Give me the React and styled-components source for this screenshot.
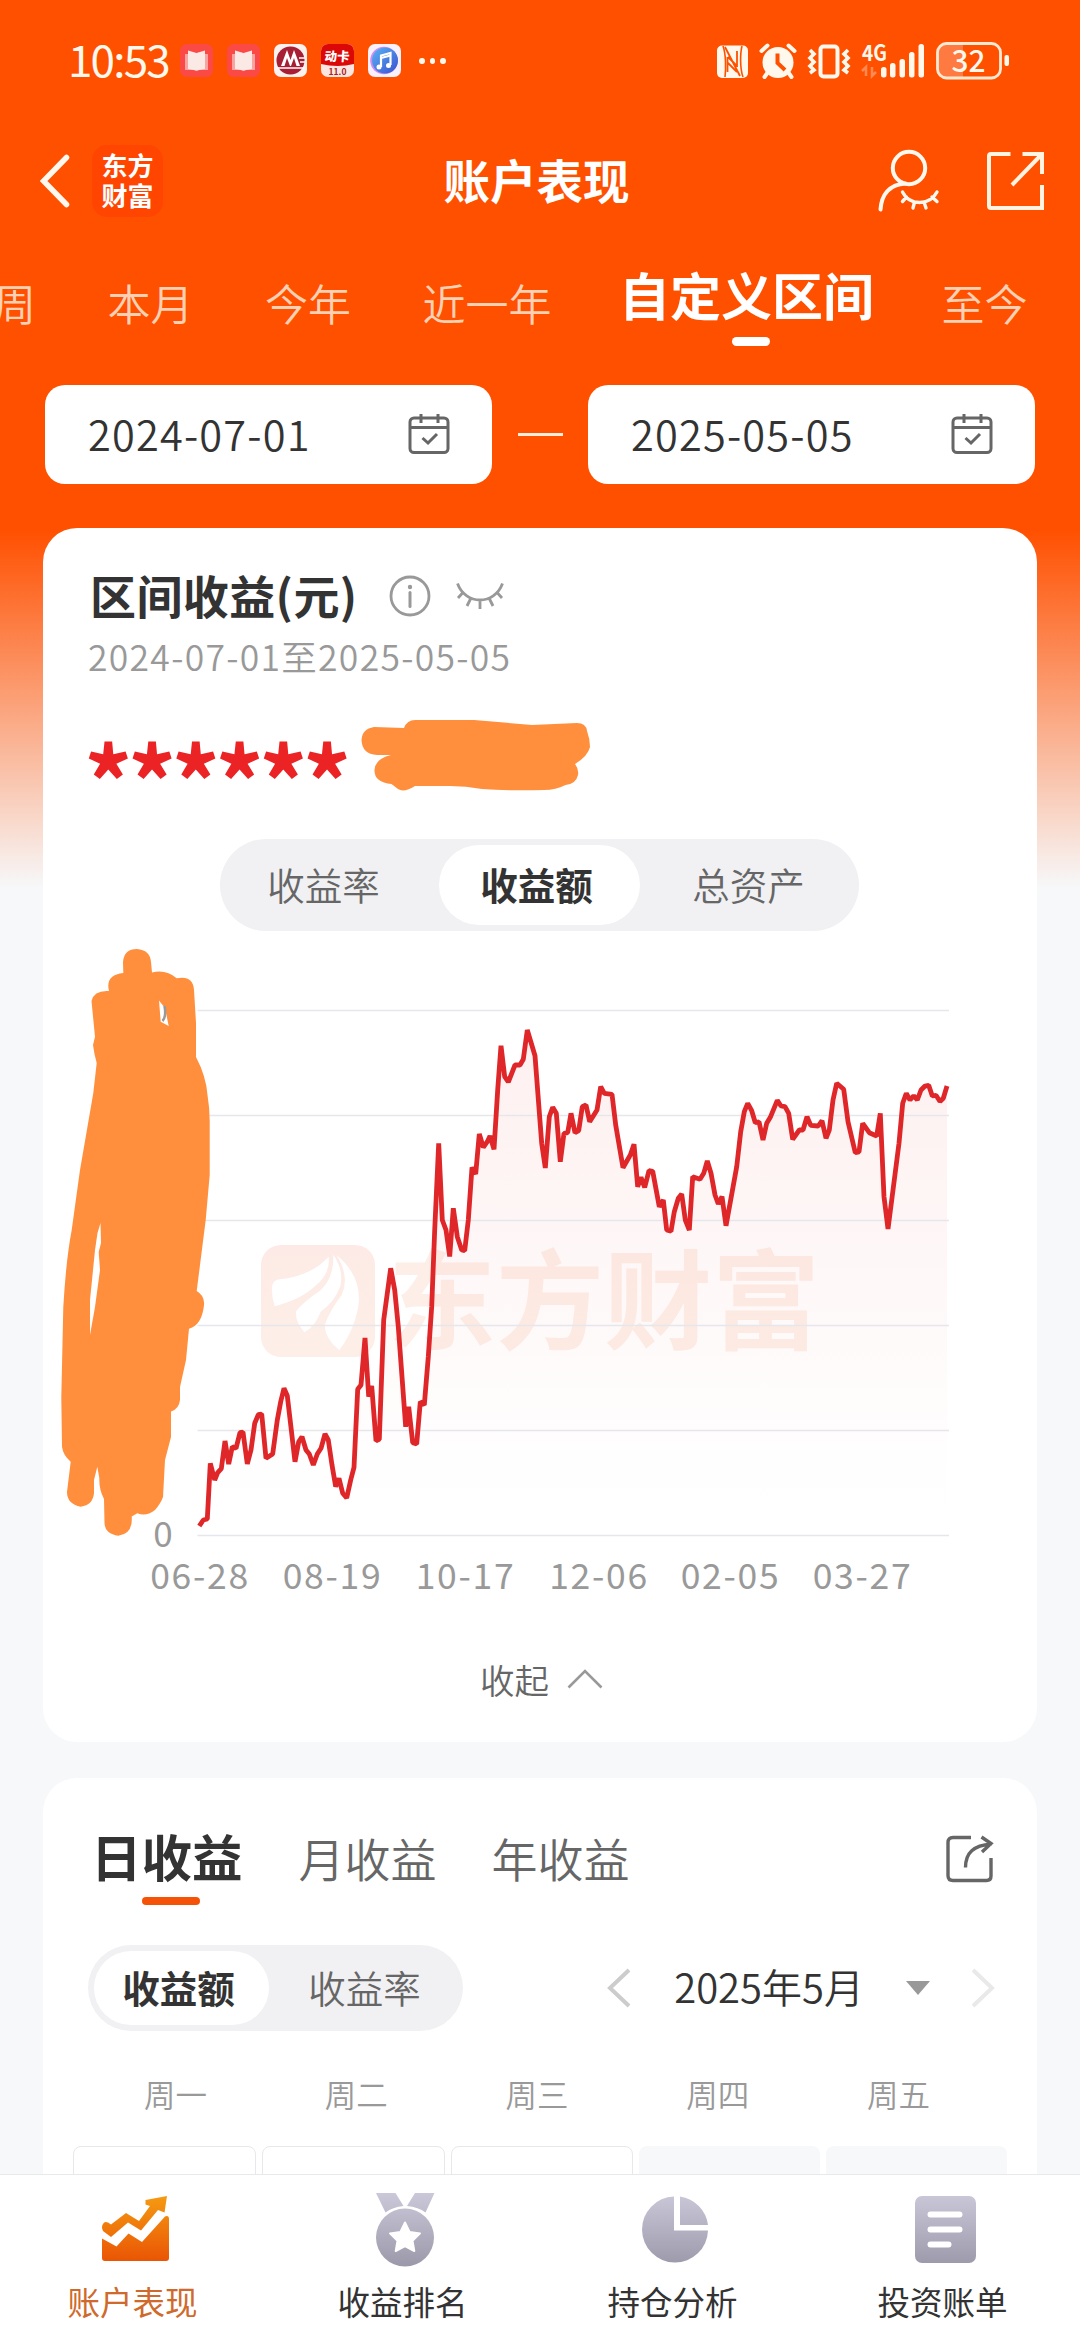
import React from "react";
import styled, { createGlobalStyle } from "styled-components";

const RANGES = ["周", "本月", "今年", "近一年", "自定义区间", "至今"];
const WEEKDAYS = ["周一", "周二", "周三", "周四", "周五"];
const GRID_Y = [1010.5, 1115.5, 1220.5, 1325.5, 1430.5, 1535.5];
const DATE_LABELS = [
  ["06-28", 200],
  ["08-19", 332.5],
  ["10-17", 465.5],
  ["12-06", 599],
  ["02-05", 730.5],
  ["03-27", 862.5],
];

const LINE =
  "199.3,1526 203.3,1520 207.3,1519 210.3,1463.3 214.7,1480 217.7,1472.7 221.3,1468.7 225,1441 228.7,1464 232.3,1446.7 236,1448.3 240,1432.7 243,1432 247.3,1464 251,1450 254.7,1423.3 258.3,1414.7 261.7,1414 266,1458.3 272.7,1454 277.3,1420 280.7,1401.7 284,1388.3 287.3,1395.7 291.3,1430 295,1461.7 298.7,1441.7 302,1436.7 306,1450 309.3,1454 313.3,1465 317.3,1454 321,1448.3 325,1434 328.3,1440 332,1465 335.7,1486.7 339,1478.3 342.7,1493.3 346.7,1498 350.7,1480 354,1467.3 357.7,1389.3 361,1385 365,1338 368.7,1396.7 371.7,1386 376,1440.7 379.3,1439.3 383.7,1320 387.3,1293.3 390.7,1268.3 394.7,1290 398.3,1326.7 405.7,1426.7 408.7,1406.7 412.7,1442.7 416.7,1444 420.3,1401.7 424.3,1405 428.3,1356.7 431.7,1306.7 434.7,1230 438.7,1143.3 442.3,1220 446,1230 449.7,1256.5 453.3,1208.3 457.3,1236.7 461.7,1250 464.7,1250.7 468.3,1220 472,1167.3 475.7,1174 479.3,1134 483.3,1147.3 487.3,1141.7 490,1136 494,1149.3 497.7,1090 501,1045.7 504.7,1076.7 508.3,1082 515,1065 520,1065 523.3,1059.3 527.3,1030 535,1055.7 541.7,1143.3 545.3,1168 549.3,1116.7 552.7,1107.3 556.3,1113.3 560.3,1161.7 564,1133.3 567.7,1132.7 571,1113.3 575,1132.7 578.7,1130.7 582.3,1106.7 586,1105 589.7,1121.7 597,1110 600.7,1086.7 604.3,1093.3 612,1094.3 615.7,1125 623,1167.7 630.3,1155 634,1144.3 637.7,1186.7 641,1177.3 644.7,1187.3 649,1170.7 652.7,1171.3 659.3,1206.7 663.3,1200 666.7,1230 671,1231.3 674.3,1211.7 678.3,1198.3 681.7,1194 685.3,1220 689.3,1230 692.7,1176.7 700,1179.3 703.7,1173.3 707.3,1161 711,1173.3 715,1195 718.3,1204 722,1196.7 726,1225.7 736.7,1166.7 740.7,1131.7 744.3,1111.7 747.7,1103.3 751.7,1110.7 755.3,1122.7 759,1121.7 763,1140 766.7,1123.3 770.3,1117.3 777.3,1100.3 781,1106 785,1106.7 788.7,1113.3 792.7,1139.3 799.3,1130 803,1130 807,1116.7 810.7,1125.3 818.3,1126 822,1120.7 826,1138.3 829.3,1130 833,1100 836.7,1083.3 843.7,1089.3 848,1121.7 855.3,1152.7 859,1152 862.7,1123.3 869.3,1132.7 876.7,1136 880.3,1113.3 884,1196.7 888,1229 899,1143.3 902.7,1103.3 906.3,1093.3 910,1100 913.7,1095.7 917.3,1100 921,1090 925,1086 928.7,1085.3 932.3,1096 936,1095.3 940,1101.5 943.3,1098.3 947,1086";

function BookIcon() {
  return (
    <svg width="33" height="33" viewBox="0 0 33 33">
      <rect width="33" height="33" rx="7" fill="#fb4a45" />
      <path d="M5 10h3v14h17V10h3v16H19l-2.500 1-2.500-1H5z" fill="#fba3a0" />
      <path d="M8 6.500l8.500 2.500v17.500L8 25zM25 6.500L16.500 9v17.500l8.500-1.500z" fill="#fbe9e6" />
    </svg>
  );
}

function BankIcon() {
  return (
    <svg width="33" height="33" viewBox="0 0 33 33">
      <rect width="33" height="33" rx="7" fill="#fbf1ee" />
      <circle cx="16.500" cy="16.500" r="14" fill="#a81f35" />
      <path d="M7 22l6-16 3.500 10L20 6l6 16h-3.500L20 14l-3 8h-1l-3-8-2.500 8z" fill="#fff" />
      <path d="M3 24h27M25 14h6M26 18h5" stroke="#fff" strokeWidth="1.600" />
    </svg>
  );
}

function CardAppIcon() {
  return (
    <svg width="33" height="33" viewBox="0 0 33 33">
      <rect width="33" height="33" rx="7" fill="#fbe6e2" />
      <path d="M0 20V7a7 7 0 0 1 7-7h19a7 7 0 0 1 7 7v13q-16.500 4-33 0z" fill="#dc0808" />
      <text x="17" y="17" fontSize="12.500" fontWeight="900" fill="#fff" textAnchor="middle" transform="skewX(-4)">
        动卡
      </text>
      <text x="16.500" y="31" fontSize="8.500" fontWeight="700" fill="#a82020" textAnchor="middle">
        11.0
      </text>
    </svg>
  );
}

function MusicIcon() {
  return (
    <svg width="33" height="33" viewBox="0 0 33 33">
      <defs>
        <linearGradient id="music" x1="0" y1="0" x2="1" y2="1">
          <stop offset="0" stopColor="#58b4f5" />
          <stop offset="1" stopColor="#3b50cf" />
        </linearGradient>
      </defs>
      <rect width="33" height="33" rx="7" fill="#f8f0fa" />
      <circle cx="16" cy="16.500" r="13.800" fill="#cf8df0" />
      <circle cx="17" cy="16.500" r="13" fill="url(#music)" />
      <path d="M13 23V11.500L22.500 9v12" fill="none" stroke="#fff" strokeWidth="2.200" />
      <path d="M13 14l9.500-2.500" stroke="#fff" strokeWidth="2" />
      <circle cx="11" cy="23" r="2.500" fill="#fff" />
      <circle cx="20.500" cy="21.500" r="2.500" fill="#fff" />
    </svg>
  );
}

function StatusIcons() {
  return (
    <svg width="294" height="80" viewBox="716 20 294 80">
      <g fill="#fff8ec">
        <rect x="717" y="44.500" width="31" height="32.500" rx="5" />
        <path d="M725 46l15 29M727.500 56v15M737 50v16M728 56l9 9M728 62l9 9" stroke="#ff5000" strokeWidth="1.800" fill="none" />
        <path d="M723 45c3 8 3 23 2 31M742 45c-2 8-2 23 1 31" stroke="#ff5000" strokeWidth="1.600" fill="none" />
        <circle cx="778" cy="61.500" r="15.500" />
        <path d="M761.500 50l6-5.500M788.500 44.500l6 5.500M768 71l-3.500 5M788 71l3.500 5" stroke="#fff8ec" strokeWidth="4" strokeLinecap="round" />
        <path d="M777.500 52.500V62l7.500 7" fill="none" stroke="#ff5000" strokeWidth="4" />
        <rect x="820.500" y="45.500" width="17" height="30" rx="3" fill="none" stroke="#fff8ec" strokeWidth="4" />
        <path d="M810 49l4 4-4 4 4 4-4 4 4 4-4 3M848 49l-4 4 4 4-4 4 4 4-4 4 4 3" fill="none" stroke="#fff8ec" strokeWidth="3.600" />
        <text x="862" y="60" fontSize="22" fontWeight="700" textLength="25" lengthAdjust="spacingAndGlyphs">
          4G
        </text>
        <path d="M866 75V66l-4 4M872 66v9l4-4" fill="none" stroke="#ff8a52" strokeWidth="2.500" />
        <rect x="881" y="66" width="5.500" height="10.500" rx="2.500" />
        <rect x="890" y="62" width="5.500" height="14.500" rx="2.500" />
        <rect x="899.500" y="58" width="5.500" height="18.500" rx="2.500" />
        <rect x="909" y="51" width="5.500" height="25.500" rx="2.500" />
        <rect x="918.500" y="43" width="5.500" height="33.500" rx="2.500" />
        <path d="M963 43v34h-17q-8 0-8-8V51q0-8 8-8z" fill="#ff7a40" />
        <rect x="937.500" y="42.500" width="63" height="34.500" rx="9" fill="none" stroke="#ffe9d2" strokeWidth="2.800" />
        <rect x="1004.500" y="54" width="4.500" height="11" rx="2" />
        <text x="951.500" y="71" fontSize="31" fontWeight="500" textLength="34" lengthAdjust="spacingAndGlyphs">
          32
        </text>
      </g>
    </svg>
  );
}

function ProfileIcon() {
  return (
    <svg width="62" height="64" viewBox="878 148 62 64" fill="none" stroke="#fff8ee" strokeWidth="4" strokeLinecap="round">
      <circle cx="909" cy="167" r="16.200" />
      <path d="M880.500 208.500c1-14 8-25 25-26" />
      <path d="M902.500 191c7 14 27 14 34.500 0M906.500 196l-4 4.500M914.500 201l-1.500 6M924 201l2 6M932 196l5 4.500" strokeWidth="3.400" />
    </svg>
  );
}

function OpenIcon() {
  return (
    <svg width="58" height="60" viewBox="986 150 58 60" fill="none" stroke="#fff3e2" strokeWidth="4">
      <path d="M1010.500 153h-19.500q-2 0-2 2v50q0 2 2 2h51V184" />
      <path d="M1022.500 153h19.500v20M1041 154l-29 30" />
    </svg>
  );
}

function CalendarIcon() {
  return (
    <svg width="42" height="42" viewBox="0 0 42 42" fill="none" stroke="#666" strokeWidth="3">
      <rect x="2" y="5" width="38" height="34.500" rx="4" />
      <path d="M2 14.500h38M13 1v9M30 1v9" />
      <path d="M14.500 25l5.500 5 9-9" />
    </svg>
  );
}

function ClosedEye() {
  return (
    <svg width="48" height="28" viewBox="0 0 48 28" fill="none" stroke="#999" strokeWidth="2.800">
      <path d="M1.500 1.500c8 22 37 22 45 0M6.500 11L2 16M15 16l-4 8M24 18v9M33 16l4 8M41.500 11l4.500 5" />
    </svg>
  );
}

function InfoIcon() {
  return (
    <svg width="42" height="42" viewBox="0 0 42 42" fill="none" stroke="#999" strokeWidth="2.800">
      <circle cx="21" cy="21" r="19" />
      <path d="M21 17.500v14" strokeWidth="3" strokeLinecap="round" />
      <circle cx="21" cy="12" r="2.200" fill="#999" stroke="none" />
    </svg>
  );
}

function ShareIcon() {
  return (
    <svg width="48" height="48" viewBox="0 0 48 48" fill="none" stroke="#666" strokeWidth="3.400">
      <path d="M25 2.500H7Q2 2.500 2 7.500v33q0 5 5 5h33.500q4.500 0 4.500-4.500V23" />
      <path d="M19.500 32.500c0-15 8-22 26-23.500M35.500 2l9.500 6.500-9 8.500" />
    </svg>
  );
}

function Smudge() {
  return (
    <svg width="230" height="72" viewBox="361 718 230 72">
      <path
        d="M361.500 739Q362 728 374 726L404 727Q407 719 415 719H474L532 724L577 722Q586 722 587 730Q590 738 590 746Q588 755 575 763Q579 768 578 774Q576 783 565.500 784Q556 789 544 789Q510 790 482 788Q466 785 450 785H415Q404 792 398 788L391.500 783Q374 781 374.500 769Q375 758 391 754H377Q362 753 361.500 739Z"
        fill="#ff8f3c"
      />
    </svg>
  );
}

function TrendChart() {
  return (
    <ChartSvg viewBox="43 931 994 669">
      <defs>
        <linearGradient id="area" x1="0" y1="1030" x2="0" y2="1535" gradientUnits="userSpaceOnUse">
          <stop offset="0" stopColor="#e82426" stopOpacity="0.07" />
          <stop offset="0.400" stopColor="#e82426" stopOpacity="0.04" />
          <stop offset="0.850" stopColor="#e82426" stopOpacity="0.005" />
          <stop offset="1" stopColor="#e82426" stopOpacity="0" />
        </linearGradient>
        <linearGradient id="mark" x1="0" y1="0" x2="0" y2="1">
          <stop offset="0" stopColor="#fdeae6" />
          <stop offset="1" stopColor="#fdefe7" />
        </linearGradient>
      </defs>
      <rect x="261" y="1245" width="114" height="112" rx="20" fill="url(#mark)" />
      <g transform="translate(40 1230) scale(0.33333)" fill="#fff">
        <path d="M696 168Q700 150 718 148Q810 140 866 80Q872 130 828 166Q785 208 704 229Q694 200 696 168Z" />
        <path d="M880 74Q912 120 901 168Q885 215 842 245Q825 290 793 307Q765 275 768 244Q790 215 840 182Q882 145 880 74Z" />
        <path d="M890 76Q958 130 957 210Q950 290 898 361Q850 320 855 283Q870 240 905 195Q930 140 890 76Z" />
      </g>
      <text x="388" y="1341" fontSize="108" fontWeight="700" fill="#fdefe7">
        东方财富
      </text>
      <polygon points={`199.300,1535 ${LINE} 947,1535`} fill="url(#area)" />
      {GRID_Y.map((y) => (
        <path key={y} d={`M197.500 ${y}H949`} stroke="#e6e7ec" strokeWidth="1.500" />
      ))}
      <polyline points={LINE} fill="none" stroke="#df2629" strokeWidth="4.800" strokeLinejoin="bevel" />
      <text x="163" y="1546.500" fontSize="35" fill="#999" textAnchor="middle">
        0
      </text>
      {DATE_LABELS.map(([label, x]) => (
        <text key={label} x={x} y="1588.500" fontSize="35.500" letterSpacing="1.700" fill="#999" textAnchor="middle">
          {label}
        </text>
      ))}
      <path
        fillRule="evenodd"
        fill="#ff8f3c"
        d="M123.300 973L123 962Q124 949 137 949Q150 950 151 962L152 972.500Q166 969 176.700 978.300Q193 975 194 990L196 1023V1057Q206 1076 207.500 1095Q210 1110 209.700 1125V1175L205.700 1220L196.700 1291Q205 1296 204 1305Q202 1325 189 1328.700L186 1360L180 1387V1400Q179 1409 171 1411.500V1437L165 1460L163 1497Q161 1503 155 1510Q146 1517 137.300 1513.300L131.700 1516.500Q133 1534 118.300 1535.700Q105 1534 104.500 1523L104 1499Q99 1490 99.300 1478L97.300 1466.700L94 1480V1493Q93 1505 80.700 1506.700Q67 1504 67 1492L70.700 1461.700Q63 1455 62 1446.700L61.300 1397L63.300 1307Q66 1260 71.700 1230L80 1170L93.300 1093L96.700 1063Q94 1053 93 1045L95 1036.700L91.500 1001Q94 990 109 991Q105 975 123.300 973ZM159 1000.500L165 1008L168.700 1026L160.700 1021.700ZM100.500 1223L101 1243L98.700 1252L100 1270L95 1307L90 1335V1300L95 1250L97.500 1233Z"
      />
      <path d="M164.500 1006q2 11-2 15" fill="none" stroke="#999" strokeWidth="2.500" />
    </ChartSvg>
  );
}

function TrendNavIcon() {
  return (
    <svg width="68" height="74" viewBox="101 2193 68 74">
      <defs>
        <linearGradient id="hot" x1="0" y1="0" x2="0" y2="1">
          <stop offset="0" stopColor="#f59a12" />
          <stop offset="1" stopColor="#ea5504" />
        </linearGradient>
      </defs>
      <path
        fill="url(#hot)"
        d="M102 2238.500L116.500 2246.500L128.500 2233.500L142 2242L165 2216.500Q169 2215 169 2219V2258Q169 2261 166 2261H105Q102 2261 102 2258ZM103 2224Q105 2220 111 2224.500L126 2213L139 2221L150 2206L145.500 2204.500V2200L167 2196L164.500 2212.500L158 2210L141 2230.500L128 2222.500L111 2237L103 2231Q101 2227 103 2224Z"
      />
    </svg>
  );
}

function GreyDefs() {
  return (
    <defs>
      <linearGradient id="grey" x1="0" y1="2193" x2="0" y2="2265" gradientUnits="userSpaceOnUse">
        <stop offset="0" stopColor="#cac8d9" />
        <stop offset="1" stopColor="#9c9aaa" />
      </linearGradient>
    </defs>
  );
}

function MedalNavIcon() {
  return (
    <svg width="60" height="74" viewBox="376.500 2193 60 74" fill="url(#grey)">
      <GreyDefs />
      <path d="M377.500 2193H397L405 2206Q394 2207 387 2212.500ZM416.500 2193H436L427 2212.500Q420 2207 408.500 2206Z" />
      <circle cx="406.500" cy="2237.500" r="29" />
      <path
        d="M406.500 2222.500l4.600 9.400 10.400 1.500-7.500 7.300 1.800 10.300-9.300-4.900-9.300 4.900 1.800-10.300-7.500-7.300 10.400-1.500z"
        fill="#fff"
        stroke="#fff"
        strokeWidth="2"
        strokeLinejoin="round"
      />
    </svg>
  );
}

function PieNavIcon() {
  return (
    <svg width="68" height="74" viewBox="641 2193 68 74" fill="url(#grey)">
      <path d="M674 2196.500V2230.500H708A33 33 0 1 1 674 2196.500ZM680 2196.500A33 33 0 0 1 708 2225H680Z" />
    </svg>
  );
}

function BillNavIcon() {
  return (
    <svg width="62" height="74" viewBox="914 2193 62 74">
      <rect x="915" y="2196" width="61" height="67" rx="7" fill="url(#grey)" />
      <path d="M930.500 2214.500h29M930.500 2229.500h29M930.500 2244.500h18" stroke="#fff" strokeWidth="6" strokeLinecap="round" />
    </svg>
  );
}

const NAV = [
  { label: "账户表现", Icon: TrendNavIcon },
  { label: "收益排名", Icon: MedalNavIcon },
  { label: "持仓分析", Icon: PieNavIcon },
  { label: "投资账单", Icon: BillNavIcon },
];

export default function App() {
  return (
    <Page>
      <GlobalStyle />
      <StatusBar>
        <Time>10:53</Time>
        <Notices>
          <BookIcon />
          <BookIcon />
          <BankIcon />
          <CardAppIcon />
          <MusicIcon />
        </Notices>
        <Dots>
          <i />
          <i />
          <i />
        </Dots>
        <StatusIcons />
      </StatusBar>

      <Header>
        <HeaderSide>
          <svg width="30" height="54" viewBox="0 0 30 54" fill="none" stroke="#fff8ee" strokeWidth="5.500" strokeLinecap="round">
            <path d="M26.500 3.500L3.500 27l23 23.500" />
          </svg>
          <Brand>
            东方
            <br />
            财富
          </Brand>
        </HeaderSide>
        <Title>账户表现</Title>
        <HeaderSide $right>
          <ProfileIcon />
          <OpenIcon />
        </HeaderSide>
      </Header>

      <RangeTabs>
        {RANGES.map((range) => (
          <RangeTab key={range} $active={range === "自定义区间"}>
            {range}
          </RangeTab>
        ))}
      </RangeTabs>

      <DateRow>
        <DateBox>
          2024-07-01
          <CalendarIcon />
        </DateBox>
        <Dash />
        <DateBox>
          2025-05-05
          <CalendarIcon />
        </DateBox>
      </DateRow>

      <Card $height="1214px">
        <CardTitle>
          区间收益(元)
          <InfoIcon />
          <ClosedEye />
        </CardTitle>
        <Period>2024-07-01至2025-05-05</Period>
        <AmountRow>
          <Stars>******</Stars>
          <Smudge />
        </AmountRow>
        <Segments $wide>
          <Segment $inset="0 18px 4px 0">收益率</Segment>
          <Segment $active $inset="0 6px 4px 0">
            收益额
          </Segment>
          <Segment $inset="0 0 4px 4px">总资产</Segment>
        </Segments>
        <TrendChart />
        <Collapse>
          收起
          <svg width="36" height="20" viewBox="0 0 36 20" fill="none" stroke="#999" strokeWidth="2.600">
            <path d="M1.500 18.500L18 2l16.500 16.500" />
          </svg>
        </Collapse>
      </Card>

      <Card $height="700px">
        <ProfitHead>
          <ProfitTab $active>日收益</ProfitTab>
          <ProfitTab>月收益</ProfitTab>
          <ProfitTab>年收益</ProfitTab>
          <ShareIcon />
        </ProfitHead>
        <FilterRow>
          <Segments>
            <Segment $active $inset="0 6px 4px 0">
              收益额
            </Segment>
            <Segment $inset="0 0 4px 3px">收益率</Segment>
          </Segments>
          <MonthPicker>
            <svg width="24" height="40" viewBox="0 0 24 40" fill="none" stroke="#ccc" strokeWidth="4">
              <path d="M22 2L3 20l19 18" />
            </svg>
            <Month>2025年5月</Month>
            <Caret />
            <svg width="24" height="40" viewBox="0 0 24 40" fill="none" stroke="#e9e9e9" strokeWidth="4">
              <path d="M2 2l19 18L2 38" />
            </svg>
          </MonthPicker>
        </FilterRow>
        <Weekdays>
          {WEEKDAYS.map((day) => (
            <span key={day}>{day}</span>
          ))}
        </Weekdays>
        <Days>
          {WEEKDAYS.map((day, i) => (
            <Day key={day} $muted={i > 2} />
          ))}
        </Days>
      </Card>

      <NavBar>
        {NAV.map(({ label, Icon }, i) => (
          <NavItem key={label} $active={i === 0}>
            <Icon />
            <span>{label}</span>
          </NavItem>
        ))}
      </NavBar>
    </Page>
  );
}

const GlobalStyle = createGlobalStyle`
  * {
    box-sizing: border-box;
  }
  body {
    margin: 0;
    font-family: "Noto Sans CJK SC", sans-serif;
  }
  svg {
    display: block;
    flex-shrink: 0;
  }
`;

const Page = styled.div`
  position: relative;
  display: flex;
  flex-direction: column;
  width: 1080px;
  height: 2340px;
  overflow: hidden;
  color: #333;
  background: linear-gradient(#ff5000 0, #ff5000 530px, #f7f8fa 888px);
`;

const StatusBar = styled.div`
  display: flex;
  flex-shrink: 0;
  align-items: center;
  height: 121px;
  padding: 0 70px 0 68px;
  > svg {
    margin-left: auto;
  }
`;

const Time = styled.div`
  width: 112px;
  padding-bottom: 5px;
  color: #fff8ec;
  font-size: 44px;
  letter-spacing: -1.8px;
  line-height: 60px;
  white-space: nowrap;
`;

const Notices = styled.div`
  display: flex;
  gap: 14px;
`;

const Dots = styled.div`
  display: flex;
  gap: 5px;
  margin-left: 18px;
  i {
    width: 5.500px;
    height: 6px;
    border-radius: 50%;
    background: #fff8ec;
  }
`;

const Header = styled.header`
  display: flex;
  flex-shrink: 0;
  align-items: center;
  justify-content: space-between;
  height: 120px;
  padding: 0 36px 0 40px;
`;

const HeaderSide = styled.div`
  display: flex;
  align-items: center;
  justify-content: ${(props) => (props.$right ? "flex-end" : "flex-start")};
  width: 200px;
  gap: ${(props) => (props.$right ? "46px" : "22px")};
`;

const Brand = styled.div`
  width: 71px;
  height: 72px;
  padding-top: 5px;
  border-radius: 15px;
  background: #ff4500;
  color: #fff;
  font-size: 26px;
  font-weight: 700;
  line-height: 29.500px;
  text-align: center;
`;

const Title = styled.h1`
  margin: 0;
  padding: 0 11px 6px 0;
  color: #fff;
  font-size: 46.500px;
  font-weight: 700;
`;

const RangeTabs = styled.div`
  display: flex;
  flex-shrink: 0;
  gap: 71.500px;
  height: 144px;
  padding-top: 23px;
  margin-left: -7px;
`;

const RangeTab = styled.div`
  flex-shrink: 0;
  margin: ${(props) => (props.$active ? "0 -4px 0 -4px" : "8px 0 0")};
  color: ${(props) => (props.$active ? "#fff" : "#ffd0b3")};
  font-size: ${(props) => (props.$active ? "51px" : "43px")};
  font-weight: ${(props) => (props.$active ? 700 : 350)};
  line-height: 60px;
  white-space: nowrap;
  &::after {
    content: "";
    display: ${(props) => (props.$active ? "block" : "none")};
    width: 38px;
    height: 9px;
    margin: 13px auto 0 113px;
    border-radius: 5px;
    background: #fff;
  }
`;

const DateRow = styled.div`
  display: flex;
  flex-shrink: 0;
  align-items: center;
  justify-content: space-between;
  padding: 0 45px;
`;

const DateBox = styled.div`
  display: flex;
  align-items: center;
  justify-content: space-between;
  width: 447px;
  height: 99px;
  padding: 0 42px 4px 43px;
  border-radius: 20px;
  background: #fff;
  font-size: 41.500px;
  font-weight: 350;
  letter-spacing: 1.2px;
  svg {
    margin-top: 3px;
  }
`;

const Dash = styled.div`
  width: 45px;
  height: 3px;
  background: #ffeedd;
`;

const Card = styled.section`
  flex-shrink: 0;
  width: 994px;
  height: ${(props) => props.$height};
  margin: 44px 0 0 43px;
  padding-top: 40px;
  border-radius: 34px;
  background: #fff;
  & + & {
    margin-top: 36px;
  }
`;

const CardTitle = styled.div`
  display: flex;
  align-items: center;
  height: 60px;
  padding: 0 0 8px 47px;
  font-size: 46px;
  font-weight: 700;
  letter-spacing: 0.4px;
  svg {
    margin-top: 4px;
  }
  svg:first-of-type {
    margin: 4px 25px 0 31px;
  }
`;

const Period = styled.div`
  margin-top: 2px;
  padding-left: 45px;
  color: #999;
  font-size: 35.500px;
  font-weight: 350;
  letter-spacing: 1.3px;
  line-height: 52px;
`;

const AmountRow = styled.div`
  display: flex;
  height: 70px;
  margin-top: 37px;
  padding-left: 41px;
`;

const Stars = styled.div`
  width: 277px;
  color: #ec2325;
  font-size: 96px;
  font-weight: 700;
  letter-spacing: -4.9px;
  line-height: 118px;
`;

const Segments = styled.div`
  display: grid;
  grid-template-columns: ${(props) => (props.$wide ? "213px 201px 213px" : "175px 188px")};
  width: ${(props) => (props.$wide ? "639px" : "375px")};
  height: ${(props) => (props.$wide ? "92px" : "86px")};
  margin: ${(props) => (props.$wide ? "50px 0 0 177px" : "0")};
  padding: 6px;
  border-radius: 46px;
  background: #f1f1f4;
`;

const Segment = styled.div`
  display: flex;
  align-items: center;
  justify-content: center;
  padding: ${(props) => props.$inset};
  border-radius: 40px;
  background: ${(props) => (props.$active ? "#fff" : "none")};
  color: ${(props) => (props.$active ? "#333" : "#666")};
  font-size: 37.500px;
  font-weight: ${(props) => (props.$active ? 700 : 350)};
`;

const ChartSvg = styled.svg`
  width: 994px;
  height: 669px;
`;

const Collapse = styled.div`
  display: flex;
  align-items: center;
  justify-content: center;
  gap: 18px;
  height: 40px;
  margin-top: 59px;
  padding-left: 3px;
  color: #666;
  font-size: 34.500px;
  font-weight: 350;
`;

const ProfitHead = styled.div`
  display: flex;
  height: 87px;
  padding: 0 43px 0 48px;
  svg {
    margin: 17px 0 0 auto;
  }
`;

const ProfitTab = styled.div`
  margin-right: ${(props) => (props.$active ? "56px" : "55px")};
  margin-top: ${(props) => (props.$active ? "7px" : "9px")};
  color: ${(props) => (props.$active ? "#333" : "#666")};
  font-size: ${(props) => (props.$active ? "50.500px" : "46px")};
  font-weight: ${(props) => (props.$active ? 700 : 350)};
  line-height: 60px;
  &::after {
    content: "";
    display: ${(props) => (props.$active ? "block" : "none")};
    width: 58px;
    height: 8px;
    margin: 12px auto 0 51px;
    border-radius: 4px;
    background: #f55208;
  }
`;

const FilterRow = styled.div`
  display: flex;
  align-items: center;
  justify-content: space-between;
  margin-top: 40px;
  padding: 0 42px 0 45px;
`;

const MonthPicker = styled.div`
  display: flex;
  align-items: center;
`;

const Month = styled.div`
  margin: 0 42px 5px 43px;
  font-size: 40px;
  font-weight: 350;
  white-space: nowrap;
`;

const Caret = styled.div`
  margin-right: 41px;
  border: 12px solid transparent;
  border-top: 14px solid #999;
  border-bottom: 0;
`;

const Weekdays = styled.div`
  display: flex;
  height: 40px;
  margin: 42px 48px 0 42px;
  color: #999;
  font-size: 31.500px;
  font-weight: 350;
  line-height: 40px;
  text-align: center;
  span {
    flex: 1;
  }
`;

const Days = styled.div`
  display: flex;
  gap: 6px;
  margin: 33px 30px 0;
`;

const Day = styled.div`
  flex: 1;
  height: 120px;
  border: ${(props) => (props.$muted ? "0" : "1px solid #e8e8ea")};
  border-radius: 8px;
  background: ${(props) => (props.$muted ? "#f7f8fa" : "#fff")};
`;

const NavBar = styled.nav`
  position: absolute;
  bottom: 0;
  left: 0;
  display: flex;
  width: 100%;
  height: 166px;
  padding-top: 18px;
  border-top: 1px solid #e9e9e9;
  background: #fff;
`;

const NavItem = styled.div`
  display: flex;
  flex: 1;
  flex-direction: column;
  align-items: center;
  gap: 14px;
  color: ${(props) => (props.$active ? "#cf6a2c" : "#333")};
  font-size: 32.500px;
  line-height: 40px;
  span {
    margin-right: 5px;
  }
`;
